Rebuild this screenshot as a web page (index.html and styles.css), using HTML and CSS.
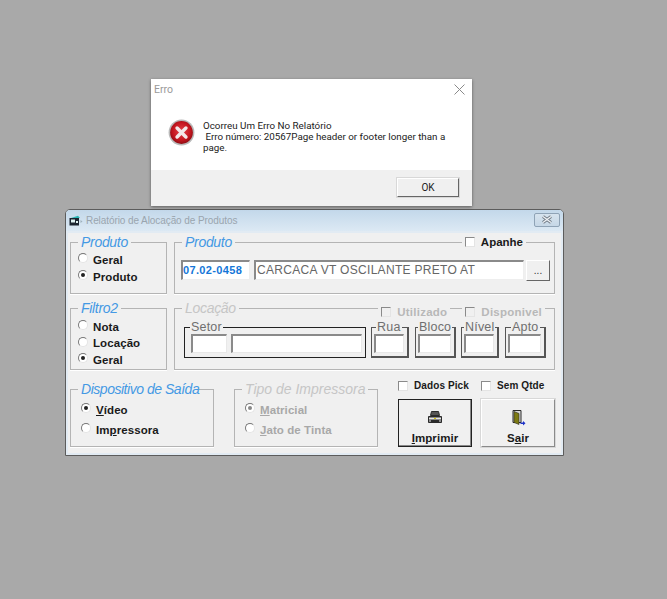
FILE: index.html
```html
<!DOCTYPE html>
<html lang="pt">
<head>
  <meta charset="UTF-8">
  <title>Relatório de Alocação de Produtos</title>
  <link rel="stylesheet" href="styles.css">
</head>
<body>
  <!-- Error dialog -->
  <div class="dialog">
    <div class="dialog-title">
      <span>Erro</span>
      <svg class="dialog-close" viewBox="0 0 11 11"><path d="M0.5 0.5L10.5 10.5M10.5 0.5L0.5 10.5" stroke="#8a8a8a" fill="none"/></svg>
    </div>
    <div class="dialog-body">
      <svg class="error-icon" viewBox="0 0 28 28">
        <defs>
          <radialGradient id="redFill" cx="50%" cy="45%" r="55%">
            <stop offset="0" stop-color="#e2434a"/>
            <stop offset="0.7" stop-color="#c5161f"/>
            <stop offset="1" stop-color="#8f0d14"/>
          </radialGradient>
        </defs>
        <circle cx="14" cy="14" r="13.4" fill="#b9b9b9"/>
        <circle cx="14" cy="14" r="11.8" fill="url(#redFill)"/>
        <path d="M9.4 9.4L18.6 18.6M18.6 9.4L9.4 18.6" stroke="#f4e9e9" stroke-width="3.6" stroke-linecap="round"/>
      </svg>
      <p class="dialog-text">Ocorreu Um Erro No Relatório<br>&nbsp;Erro número: 20567Page header or footer longer than a page.</p>
    </div>
    <div class="dialog-footer">
      <button class="ok-btn">OK</button>
    </div>
  </div>

  <!-- Main window -->
  <div class="window">
    <div class="titlebar">
      <svg class="app-icon" viewBox="0 0 14 12">
        <path d="M2 3L9 0.800L11 3z" fill="#2bb5b5"/>
        <rect x="0.500" y="3" width="9.500" height="7.500" fill="#1c2530"/>
        <rect x="2" y="4.500" width="4" height="3" fill="#dff2f2"/>
        <rect x="7" y="6" width="2" height="2" fill="#dff2f2"/>
        <path d="M11.500 5l2 1.500-2 1.500z" fill="#9fb0bb"/>
      </svg>
      <span class="title-text">Relatório de Alocação de Produtos</span>
      <div class="win-close">
        <svg viewBox="0 0 12 9"><path d="M2 1.500L10 7.500M10 1.500L2 7.500" stroke="#6b7580" stroke-width="3" fill="none"/><path d="M2 1.500L10 7.500M10 1.500L2 7.500" stroke="#eef2f5" stroke-width="1.400" fill="none"/></svg>
      </div>
    </div>

    <div class="content">
      <div class="row row-one">
        <section class="group group-narrow">
          <div class="group-head"><span class="legend">Produto</span></div>
          <div class="radios">
            <label class="radio-line"><i class="radio"></i>Geral</label>
            <label class="radio-line"><i class="radio on"></i>Produto</label>
          </div>
        </section>
        <section class="group group-wide">
          <div class="group-head">
            <span class="legend">Produto</span>
            <label class="check-line head-check"><i class="check"></i>Apanhe</label>
          </div>
          <div class="product-fields">
            <div class="field code">07.02-0458</div>
            <div class="field desc">CARCACA VT OSCILANTE PRETO AT</div>
            <button class="dots">...</button>
          </div>
        </section>
      </div>

      <div class="row row-two">
        <section class="group group-narrow">
          <div class="group-head"><span class="legend">Filtro2</span></div>
          <div class="radios tight">
            <label class="radio-line"><i class="radio"></i>Nota</label>
            <label class="radio-line"><i class="radio"></i>Locação</label>
            <label class="radio-line"><i class="radio on"></i>Geral</label>
          </div>
        </section>
        <section class="group group-wide">
          <div class="group-head">
            <span class="legend off">Locação</span>
            <div class="head-checks">
              <label class="check-line off"><i class="check"></i>Utilizado</label>
              <label class="check-line off"><i class="check"></i>Disponivel</label>
            </div>
          </div>
          <div class="boxes">
            <div class="mini mini-setor">
              <span class="mini-label">Setor</span>
              <div class="mini-fields"><div class="sunken s1"></div><div class="sunken s2"></div></div>
            </div>
            <div class="mini mini-rua">
              <span class="mini-label">Rua</span>
              <div class="mini-fields"><div class="sunken grow"></div></div>
            </div>
            <div class="mini mini-bloco">
              <span class="mini-label">Bloco</span>
              <div class="mini-fields"><div class="sunken grow"></div></div>
            </div>
            <div class="mini mini-nivel">
              <span class="mini-label">Nível</span>
              <div class="mini-fields"><div class="sunken grow"></div></div>
            </div>
            <div class="mini mini-apto">
              <span class="mini-label">Apto</span>
              <div class="mini-fields"><div class="sunken grow"></div></div>
            </div>
          </div>
        </section>
      </div>

      <div class="row row-three">
        <section class="group group-output">
          <div class="group-head"><span class="legend flush">Dispositivo de Saída</span></div>
          <div class="radios wide">
            <label class="radio-line"><i class="radio on"></i><span><u>V</u>ídeo</span></label>
            <label class="radio-line"><i class="radio"></i><span>Im<u>p</u>ressora</span></label>
          </div>
        </section>
        <section class="group group-output">
          <div class="group-head"><span class="legend off loose">Tipo de Impressora</span></div>
          <div class="radios wide off">
            <label class="radio-line"><i class="radio on"></i><span><u>M</u>atricial</span></label>
            <label class="radio-line"><i class="radio"></i><span><u>J</u>ato de Tinta</span></label>
          </div>
        </section>
        <div class="actions">
          <div class="action-checks">
            <label class="check-line small"><i class="check"></i>Dados Pick</label>
            <label class="check-line small"><i class="check"></i>Sem Qtde</label>
          </div>
          <div class="action-buttons">
            <button class="big-btn default">
              <svg class="btn-icon" viewBox="0 0 16 16">
                <path d="M4.500 1.500h7l1 4h-9z" fill="#555" stroke="#2a2a2a"/>
                <path d="M1.500 6.500h13v6h-13z" fill="#8c8c8c" stroke="#2a2a2a"/>
                <path d="M2 8.500h12" stroke="#e4e4e4"/>
                <rect x="4" y="10" width="8" height="3" fill="#2a2a2a"/>
                <rect x="7" y="8" width="2" height="1" fill="#d8c400"/>
              </svg>
              <span><u>I</u>mprimir</span>
            </button>
            <button class="big-btn">
              <svg class="btn-icon" viewBox="0 0 16 16">
                <path d="M3 0.500h8v12h-8z" fill="#d8d8d8" stroke="#2a2a2a"/>
                <path d="M4 1.500l5 2v11l-5-2z" fill="#7d7a12" stroke="#2a2a2a" stroke-width="0.600"/>
                <path d="M10.500 12.500h2.500v-1.500l2.500 2.300-2.500 2.200v-1.500h-2.500z" fill="#1f33c8"/>
              </svg>
              <span>S<u>a</u>ir</span>
            </button>
          </div>
        </div>
      </div>
    </div>
  </div>
</body>
</html>
```
FILE: styles.css
```css
* {
  margin: 0;
  padding: 0;
  box-sizing: border-box;
}

body {
  width: 667px;
  height: 599px;
  background: #a9a9a9;
  overflow: hidden;
  position: relative;
  font-family: 'Liberation Sans', Arial, sans-serif;
}

/* error dialog */

.dialog {
  position: absolute;
  left: 151px;
  top: 79px;
  width: 321px;
  height: 127px;
  background: #fff;
  box-shadow: 0 1px 3px rgba(0, 0, 0, 0.45);
  display: flex;
  flex-direction: column;
  z-index: 2;
}

.dialog-title {
  display: flex;
  justify-content: space-between;
  align-items: center;
  padding: 1px 7px 0 3px;
  height: 19px;
  font-family: Roboto, sans-serif;
  font-size: 10.5px;
  color: #9a9a9a;
}

.dialog-close {
  width: 11px;
  height: 11px;
}

.dialog-body {
  flex: 1;
  display: flex;
  padding: 21px 20px 0 17px;
  gap: 8px;
}

.error-icon {
  width: 27px;
  height: 27px;
  flex: none;
}

.dialog-text {
  font-family: Roboto, sans-serif;
  font-size: 9.8px;
  line-height: 11px;
  color: #222;
  width: 250px;
  padding-top: 1px;
}

.dialog-footer {
  height: 36px;
  background: #f0f0f0;
  display: flex;
  justify-content: flex-end;
  padding: 8px 13px 0 0;
}

.ok-btn {
  width: 62px;
  height: 19px;
  background: #f0f0f0;
  border: 1px solid;
  border-color: #fff #666 #666 #fff;
  box-shadow: 0 0 0 1px #d8d8d8;
  font-family: Roboto, sans-serif;
  font-size: 10px;
  color: #222;
}

/* main window */

.window {
  position: absolute;
  left: 65px;
  top: 209px;
  width: 499px;
  height: 247px;
  background: #f0f0f0;
  border: 1px solid #5c5c5c;
  border-radius: 5px 5px 0 0;
}

.titlebar {
  height: 21px;
  background: linear-gradient(#c3d8ea, #dce9f4);
  border-radius: 4px 4px 0 0;
  display: flex;
  align-items: center;
  padding: 0 3px 0 3px;
}

.app-icon {
  width: 14px;
  height: 12px;
  flex: none;
}

.title-text {
  margin-left: 3px;
  font-size: 10px;
  letter-spacing: -0.08px;
  color: #9aa5ae;
  flex: 1;
}

.win-close {
  width: 26px;
  height: 14px;
  border: 1px solid #8fa3b6;
  border-radius: 2px;
  background: linear-gradient(#d6e3ee, #c6d7e6);
  display: flex;
  align-items: center;
  justify-content: center;
  margin-top: -2px;
}

.win-close svg {
  width: 12px;
  height: 9px;
}

.content {
  height: 224px;
  padding: 11px 8px 0 4px;
  display: flex;
  flex-direction: column;
  box-shadow: inset 0 0 0 2px #e2ebf3;
}

.row {
  display: flex;
}

.row-one {
  gap: 7px;
  height: 52px;
}

.row-two {
  gap: 7px;
  height: 62px;
  margin-top: 14px;
}

.row-three {
  gap: 20px;
  height: 58px;
  margin-top: 19px;
}

/* groups */

.group {
  border: 1px solid #b4b4b4;
  box-shadow: 0 1px 0 #fff;
}

.group-narrow {
  width: 97px;
}

.group-wide {
  width: 381px;
}

.group-output {
  width: 144px;
}

.group-head {
  display: flex;
  justify-content: space-between;
  align-items: center;
  height: 16px;
  margin-top: -9px;
  padding: 0 19px 0 7px;
}

.legend {
  background: #f0f0f0;
  padding: 0 3px;
  font-style: italic;
  font-size: 14px;
  letter-spacing: -0.3px;
  color: #4499e4;
  white-space: nowrap;
}

.legend.flush {
  padding: 0 0 0 3px;
  letter-spacing: -0.47px;
}

.legend.off {
  color: #c6c6c6;
}

.legend.loose {
  letter-spacing: 0;
}

.radios {
  display: flex;
  flex-direction: column;
  gap: 2px;
  padding: 2px 0 0 7px;
}

.radios.tight {
  gap: 1.5px;
  padding-top: 3px;
}

.radios.wide {
  gap: 5px;
  padding: 5px 0 0 10px;
}

.radio-line {
  display: flex;
  align-items: center;
  gap: 5px;
  height: 15px;
  font-weight: bold;
  font-size: 11.5px;
  letter-spacing: 0.08px;
  color: #1a1a1a;
}

.radios.off .radio-line {
  color: #a8a8a8;
}

.radio {
  width: 10px;
  height: 10px;
  border-radius: 50%;
  background: #fff;
  border: 1px solid;
  border-color: #777 #e4e4e4 #e4e4e4 #777;
  position: relative;
  flex: none;
  margin-top: -3px;
}

.radio.on::after {
  content: '';
  position: absolute;
  left: 2px;
  top: 2px;
  width: 4px;
  height: 4px;
  border-radius: 50%;
  background: #222;
}

.radios.off .radio.on::after {
  background: #888;
}

/* checkboxes */

.check-line {
  display: flex;
  align-items: center;
  gap: 6px;
  background: #f0f0f0;
  padding: 0 3px;
  font-weight: bold;
  font-size: 11.5px;
  color: #1a1a1a;
  white-space: nowrap;
}

.check-line.off {
  letter-spacing: 0.25px;
  color: #b8b8b8;
}

.check-line.small {
  padding: 0;
  font-size: 10px;
  letter-spacing: 0.1px;
}

.check {
  width: 10px;
  height: 10px;
  background: #fff;
  border: 1px solid;
  border-color: #8a8a8a #e4e4e4 #e4e4e4 #8a8a8a;
  flex: none;
}

.off .check {
  background: #f0f0f0;
}

.head-checks {
  display: flex;
  gap: 12px;
  margin: 8px -10px 0 0;
}

.head-check {
  margin-right: 9px;
}

/* product row */

.product-fields {
  display: flex;
  gap: 4px;
  padding: 10px 0 0 6px;
}

.field {
  height: 20px;
  background: #fff;
  border: 1px solid;
  border-color: #8a8a8a #eee #eee #8a8a8a;
  border-width: 2px 1px 1px 2px;
  line-height: 16px;
  white-space: nowrap;
}

.code {
  width: 69px;
  padding-left: 0;
  font-weight: bold;
  font-size: 11px;
  letter-spacing: 0.35px;
  color: #1476d8;
}

.desc {
  width: 270px;
  padding-left: 1px;
  font-size: 12px;
  letter-spacing: 0.3px;
  color: #666;
}

.dots {
  width: 24px;
  height: 21px;
  margin-left: -2px;
  background: #f0f0f0;
  border: 1px solid;
  border-color: #fff #666 #666 #fff;
  font-size: 10px;
  color: #333;
}

/* location boxes */

.boxes {
  display: flex;
  padding: 11px 0 0 9px;
}

.mini {
  height: 31px;
  border: 1px solid #555;
  border-width: 1px 2px 2px 1px;
}

.mini-setor {
  width: 182px;
  border-color: #222;
  border-width: 1px;
}

.mini-rua {
  width: 38px;
  margin-left: 5px;
}

.mini-bloco {
  width: 41px;
  margin-left: 6px;
}

.mini-nivel {
  width: 38px;
  margin-left: 5px;
}

.mini-apto {
  width: 41px;
  margin-left: 6px;
}

.mini-label {
  display: block;
  width: max-content;
  height: 12px;
  margin: -7px 0 0 5px;
  padding: 0 1px;
  background: #f0f0f0;
  font-size: 12.5px;
  line-height: 12px;
  letter-spacing: 0.2px;
  color: #6f6f6f;
}

.mini-rua .mini-label {
  margin-left: 4px;
}

.mini-bloco .mini-label,
.mini-nivel .mini-label {
  margin-left: 2px;
}

.mini-fields {
  display: flex;
  gap: 4px;
  padding: 1px 3px 0 2px;
}

.mini-setor .mini-fields {
  padding: 1px 2px 0 6px;
}

.sunken {
  height: 19px;
  background: #fff;
  border: 1px solid;
  border-color: #8a8a8a #e8e8e8 #e8e8e8 #8a8a8a;
  border-width: 2px 1px 1px 2px;
}

.s1 {
  width: 36px;
}

.s2 {
  width: 131px;
}

.grow {
  flex: 1;
}

/* bottom right */

.actions {
  display: flex;
  flex-direction: column;
  margin-top: -10px;
}

.action-checks {
  display: flex;
  gap: 13px;
  height: 14px;
}

.action-checks .check-line {
  width: 70px;
}

.action-buttons {
  display: flex;
  gap: 9px;
  margin-top: 7px;
}

.big-btn {
  width: 74px;
  height: 48px;
  background: #f0f0f0;
  border: 1px solid;
  border-color: #fff #8a8a8a #8a8a8a #fff;
  box-shadow: 0 0 0 1px #d8d8d8;
  display: flex;
  flex-direction: column;
  align-items: center;
  justify-content: flex-end;
  padding-bottom: 2px;
  gap: 6px;
  font-family: 'Liberation Sans', Arial, sans-serif;
  font-weight: bold;
  font-size: 11.5px;
  letter-spacing: 0.08px;
  color: #1a1a1a;
}

.big-btn.default {
  border-color: #222;
  box-shadow: inset -1px -1px 0 #888;
}

.btn-icon {
  width: 16px;
  height: 16px;
}
```
